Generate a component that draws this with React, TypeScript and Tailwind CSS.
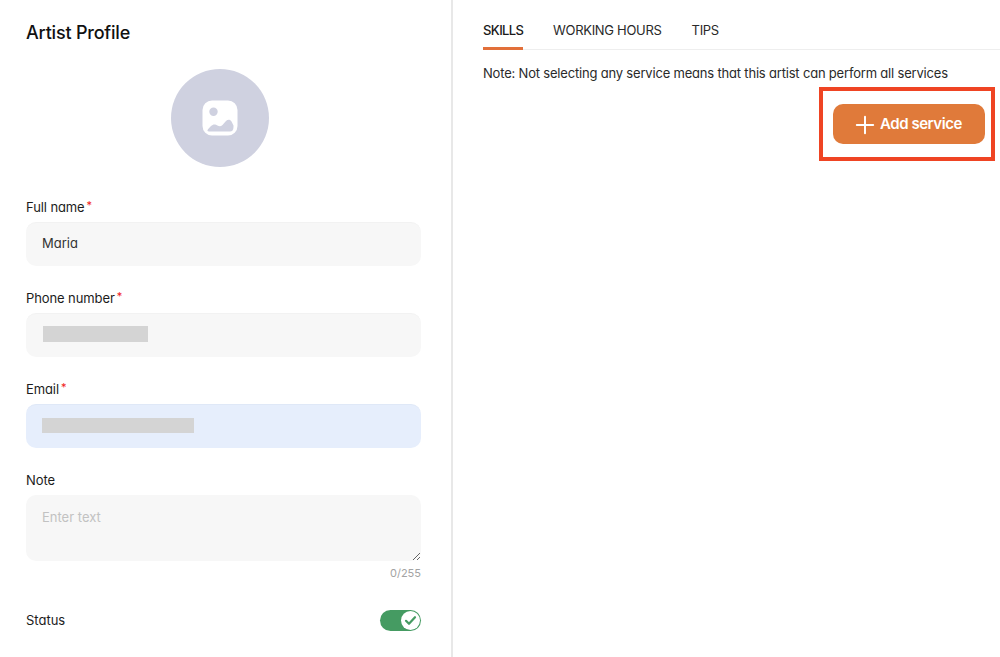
import React from 'react';
import { Plus } from 'lucide-react';

const Label = ({ text, required }: { text: string; required?: boolean }) => (
  <div className="h-[15px] flex items-center text-[13px] leading-[15px] text-[#1c1c1c] tracking-[-0.1px]">
    {text}
    {required && <span className="text-[#f02020] text-[11px] leading-[11px] ml-[2px] -mt-[5px]">*</span>}
  </div>
);

const ImageIcon = () => (
  <svg width="36" height="36" viewBox="0 0 36 36">
    <path
      fillRule="evenodd"
      fill="#ffffff"
      d="M10 0.500H26A9.500 9.500 0 0 1 35.500 10V26A9.500 9.500 0 0 1 26 35.500H10A9.500 9.500 0 0 1 0.500 26V10A9.500 9.500 0 0 1 10 0.500ZM11.500 7.500A4.200 4.200 0 1 0 11.500 15.900A4.200 4.200 0 1 0 11.500 7.500ZM7 31.500C5.500 31.500 5 30.500 6 29.200L9 26C10.500 24.400 12.500 24 14 24.800C16.500 26.400 18.500 26.800 20.500 25L24 21C25.800 19 28.300 19.200 29.500 21.500L31.500 25.500V27C31.500 30 30.200 31.500 28 31.500Z"
    />
  </svg>
);

const App = () => {
  return (
    <div className="flex h-[657px] w-[1000px] overflow-hidden bg-white text-[#1c1c1c] font-['Inter',sans-serif] [font-feature-settings:'cv11']">
      {/* Left panel */}
      <div className="w-[453px] shrink-0 border-r-2 border-[#e8e8e8] pl-[26px] pr-[30px] pt-[22px]">
        <h1 className="text-[18px] leading-[21px] font-medium text-[#111111] tracking-[-0.2px]">Artist Profile</h1>

        <div className="flex justify-center mt-[26px] pr-[7px]">
          <div className="w-[98px] h-[98px] rounded-full bg-[#cfd1e0] flex items-center justify-center">
            <ImageIcon />
          </div>
        </div>

        <div className="mt-[33px]">
          <Label text="Full name" required />
          <div className="mt-[7px] h-[44px] rounded-[10px] bg-[#f7f7f7] border-t border-[#f2f2f2] px-[16px] pb-[2px] flex items-center text-[13px] text-[#333333]">
            Maria
          </div>
        </div>

        <div className="mt-[25px]">
          <Label text="Phone number" required />
          <div className="mt-[7px] h-[44px] rounded-[10px] bg-[#f7f7f7] border-t border-[#f2f2f2] px-[17px] pb-[4px] flex items-center">
            <div className="w-[105px] h-[16px] bg-[#d4d4d4]" />
          </div>
        </div>

        <div className="mt-[25px]">
          <Label text="Email" required />
          <div className="mt-[7px] h-[44px] rounded-[10px] bg-[#e6eefc] border-t border-[#dfe8f7] px-[16px] pb-[2px] flex items-center">
            <div className="w-[152px] h-[15px] bg-[#d4d4d4]" />
          </div>
        </div>

        <div className="mt-[25px]">
          <Label text="Note" />
          <textarea
            readOnly
            placeholder="Enter text"
            className="block mt-[7px] w-full h-[66px] rounded-[10px] bg-[#f7f7f7] px-[16px] pt-[14px] pb-[12px] text-[13px] leading-[17px] text-[#333333] placeholder:text-[#c2c2c2] outline-none"
          />
          <div className="mt-[5px] text-right text-[11px] leading-[14px] text-[#a3a3a3]">0/255</div>
        </div>

        <div className="mt-[30px] flex items-center justify-between">
          <span className="text-[13px] leading-[15px] text-[#1c1c1c]">Status</span>
          <div className="w-[41px] h-[21px] rounded-full bg-[#459b62] flex items-center justify-end pr-[1px]">
            <div className="w-[19px] h-[19px] rounded-full bg-white flex items-center justify-center">
              <svg width="13" height="13" viewBox="0 0 13 13" fill="none">
                <path d="M2 6.800L5 9.800L11 3.200" stroke="#459b62" strokeWidth="2.200" strokeLinecap="round" strokeLinejoin="round" />
              </svg>
            </div>
          </div>
        </div>
      </div>

      {/* Right panel */}
      <div className="flex-1 min-w-0 pl-[30px]">
        <div className="flex h-[50px] gap-[30px] border-b border-[#eeeeee] text-[13px] tracking-[-0.3px] text-[#2a2a2a]">
          <div className="h-[50px] w-[40px] pt-[22px] leading-[16px] font-medium tracking-[-0.6px] text-[#1a1a1a] border-b-[3px] border-[#e2703a] whitespace-nowrap">
            SKILLS
          </div>
          <div className="pt-[22px] leading-[16px] whitespace-nowrap">WORKING HOURS</div>
          <div className="pt-[22px] leading-[16px] whitespace-nowrap">TIPS</div>
        </div>

        <p className="mt-[15px] text-[13px] leading-[17px] tracking-[-0.19px] text-[#2a2a2a]">
          Note: Not selecting any service means that this artist can perform all services
        </p>

        <div className="flex justify-end mt-[5px] pr-[5px]">
          <div className="border-4 border-[#ef4423] pl-[10px] pr-[6px] pt-[13px] pb-[13px] flex">
            <button className="w-[152px] h-[40px] rounded-[10px] bg-[#e07a3a] flex items-center justify-start pl-[18px] gap-[1px] pt-[1px] text-[15px] font-semibold tracking-[-0.45px] text-white">
              <Plus size={28} strokeWidth={1.7} />
              Add service
            </button>
          </div>
        </div>
      </div>
    </div>
  );
};

export default App;
